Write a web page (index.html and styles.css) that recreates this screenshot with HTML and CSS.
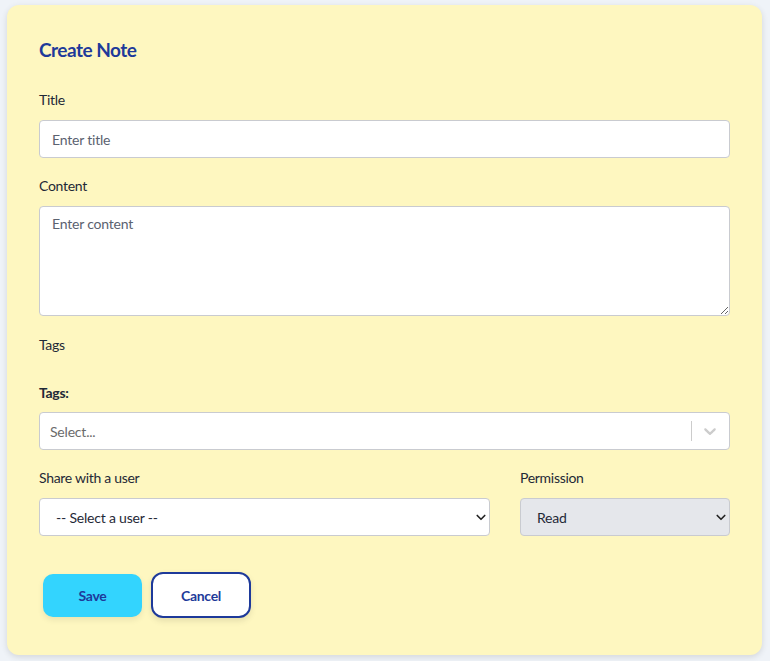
FILE: index.html
```html
<!DOCTYPE html>
<html lang="en">
<head>
<meta charset="utf-8">
<title>Create Note</title>
<link rel="stylesheet" href="styles.css">
</head>
<body>
<div class="card">
  <h2 class="heading">Create Note</h2>
  <form class="form">
    <div class="field first">
      <label class="label">Title</label>
      <input class="input" type="text" placeholder="Enter title">
    </div>
    <div class="field">
      <label class="label">Content</label>
      <textarea class="textarea" placeholder="Enter content"></textarea>
    </div>
    <div class="field tags-plain">
      <label class="label">Tags</label>
    </div>
    <div class="field tags-field">
      <label class="label bold">Tags:</label>
      <div class="rs-control">
        <div class="rs-value">Select...</div>
        <div class="rs-indicators">
          <span class="rs-sep"></span>
          <svg class="rs-chev" width="20" height="20" viewBox="0 0 20 20"><path d="M4.516 7.548c0.436-0.446 1.043-0.481 1.576 0l3.908 3.747 3.908-3.747c0.533-0.481 1.141-0.446 1.574 0 0.436 0.445 0.408 1.197 0 1.615-0.406 0.418-4.695 4.502-4.695 4.502-0.217 0.223-0.502 0.335-0.787 0.335s-0.57-0.112-0.789-0.335c0 0-4.287-4.084-4.695-4.502s-0.436-1.170 0-1.615z" fill="#cccccc"/></svg>
        </div>
      </div>
    </div>
    <div class="row">
      <div class="field-col">
        <label class="label">Share with a user</label>
        <div class="select-wrap">
          <select class="select"><option>-- Select a user --</option></select>
          <svg class="sel-chev" width="12" height="12" viewBox="0 0 16 16"><path d="M3 6l5 5 5-5" fill="none" stroke="#222" stroke-width="2.2" stroke-linecap="round" stroke-linejoin="round"/></svg>
        </div>
      </div>
      <div class="field-col">
        <label class="label">Permission</label>
        <div class="select-wrap">
          <select class="select gray"><option>Read</option></select>
          <svg class="sel-chev" width="12" height="12" viewBox="0 0 16 16"><path d="M3 6l5 5 5-5" fill="none" stroke="#222" stroke-width="2.2" stroke-linecap="round" stroke-linejoin="round"/></svg>
        </div>
      </div>
    </div>
    <div class="actions">
      <button type="button" class="btn save">Save</button>
      <button type="button" class="btn cancel">Cancel</button>
    </div>
  </form>
</div>
</body>
</html>
```
FILE: styles.css
```css
* { box-sizing: border-box; }
html, body { margin: 0; }
body {
  background: #eff3f8;
  padding: 5px 8px 6px 7px;
  font-family: "Lato", "Open Sans", sans-serif;
  color: #1f2937;
}
.card {
  width: 755px;
  height: 650px;
  background: #fef7c0;
  border-radius: 12px;
  box-shadow: 0 2px 6px rgba(0,0,0,0.12);
  padding: 31px 32px 0 32px;
}
.heading {
  margin: 0;
  font-size: 19px;
  line-height: 28px;
  font-weight: 700;
  letter-spacing: -0.5px;
  color: #1e3a9a;
}
.form { display: flex; flex-direction: column; }
.field { display: flex; flex-direction: column; margin-top: 18px; }
.field.first { margin-top: 26px; }
.label {
  font-size: 14px;
  line-height: 20px;
  letter-spacing: -0.3px;
  color: #1f2937;
  margin-bottom: 10px;
}
.label.bold { font-weight: 700; margin-bottom: 9px; }
.tags-plain { margin-top: 19px; }
.tags-plain .label { margin-bottom: 0; }
.tags-field { margin-top: 28px; }
.input, .textarea, .select {
  font-family: inherit;
  font-size: 14px;
  letter-spacing: -0.2px;
  color: #374151;
  background: #fff;
  border: 1px solid #c9cbd0;
  border-radius: 4px;
  width: 100%;
  outline: none;
}
.input { height: 38px; padding: 0 12px; }
.textarea { height: 110px; padding: 8px 12px; resize: vertical; display: block; }
.input::placeholder, .textarea::placeholder { color: #5b6270; }
.rs-control {
  height: 38px;
  background: #fff;
  border: 1px solid #c9cbd0;
  border-radius: 4px;
  display: flex;
  align-items: center;
}
.rs-value { flex: 1; padding-left: 10px; font-size: 14px; letter-spacing: -0.2px; color: #6b6b6b; }
.rs-indicators { display: flex; align-items: center; height: 100%; }
.rs-sep { width: 1px; height: 20px; background: #cccccc; }
.rs-chev { margin: 0 9px 0 8px; display: block; }
.row {
  display: grid;
  grid-template-columns: 451px 210px;
  column-gap: 30px;
  margin-top: 18px;
}
.field-col { display: flex; flex-direction: column; }
.select-wrap { position: relative; }
.select {
  -webkit-appearance: none;
  appearance: none;
  height: 38px;
  padding: 0 16px;
  color: #1f2937;
  display: block;
}
.select.gray { background: #e5e7eb; }
.sel-chev { position: absolute; right: 3px; top: 13px; }
.actions {
  display: flex;
  align-items: center;
  gap: 9px;
  margin-top: 36px;
  padding-left: 4px;
}
.btn {
  font-family: inherit;
  font-size: 14px;
  font-weight: 700;
  letter-spacing: -0.3px;
  color: #1e3a9a;
  cursor: pointer;
}
.save {
  width: 99px;
  height: 43px;
  background: #33d4fe;
  border: none;
  border-radius: 10px;
  box-shadow: 0 3px 6px rgba(0,0,0,0.08);
}
.cancel {
  width: 100px;
  height: 46px;
  background: #fff;
  border: 2px solid #1e3a9a;
  border-radius: 12px;
  box-shadow: 0 3px 6px rgba(0,0,0,0.1);
}
```
